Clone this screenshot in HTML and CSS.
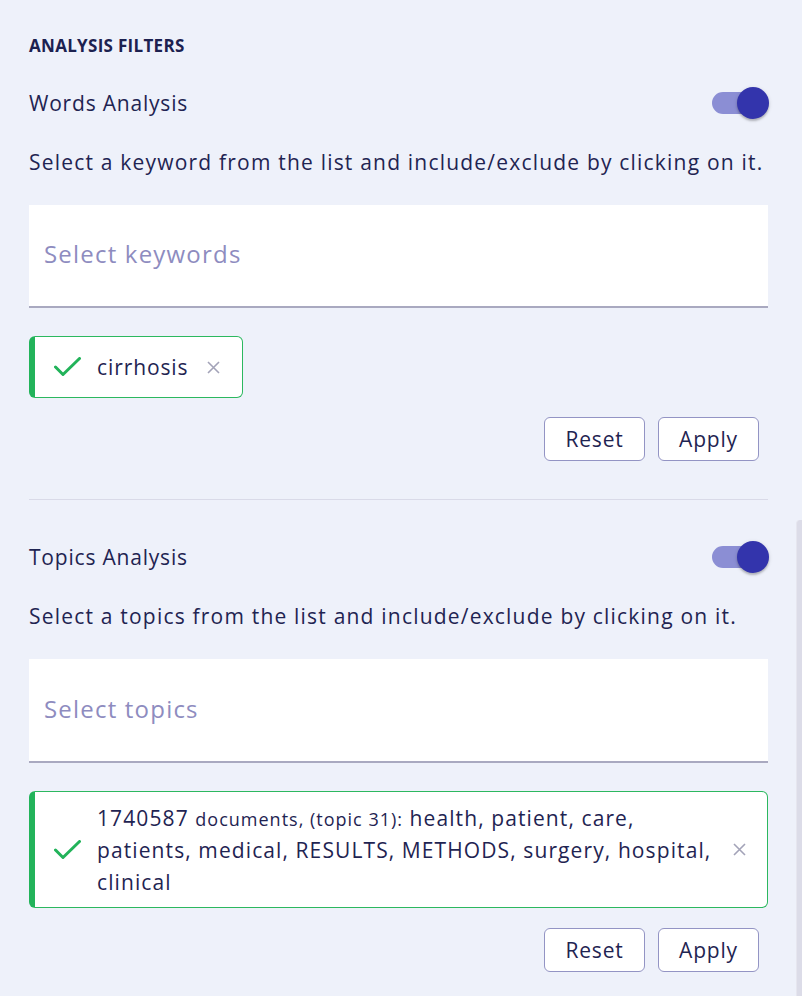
FILE: index.html
```html
<!DOCTYPE html>
<html lang="en">
<head>
<meta charset="utf-8">
<title>Analysis Filters</title>
<link rel="stylesheet" href="styles.css">
</head>
<body>
<div class="panel">
  <h2 class="panel-title">ANALYSIS FILTERS</h2>

  <section class="filter">
    <div class="filter-head">
      <span class="filter-name">Words Analysis</span>
      <span class="switch"><span class="switch-track"></span><span class="switch-thumb"></span></span>
    </div>
    <p class="filter-desc">Select a keyword from the list and include/exclude by clicking on it.</p>
    <div class="select"><span class="placeholder">Select keywords</span></div>
    <div class="chips">
      <div class="chip">
        <svg class="chip-check" width="27" height="20" viewBox="0 0 27 20"><polyline points="1.5,10 9,17.5 25.5,1.5" fill="none" stroke="#22b35a" stroke-width="3" stroke-linecap="round" stroke-linejoin="round"/></svg>
        <span class="chip-text">cirrhosis</span>
        <svg class="chip-x" width="13" height="13" viewBox="0 0 13 13"><path d="M1 1L12 12M12 1L1 12" stroke="#a3a3b8" stroke-width="1.6" fill="none"/></svg>
      </div>
    </div>
    <div class="actions">
      <button class="btn">Reset</button>
      <button class="btn">Apply</button>
    </div>
  </section>

  <hr class="divider">

  <section class="filter filter-second">
    <div class="filter-head">
      <span class="filter-name">Topics Analysis</span>
      <span class="switch"><span class="switch-track"></span><span class="switch-thumb"></span></span>
    </div>
    <p class="filter-desc">Select a topics from the list and include/exclude by clicking on it.</p>
    <div class="select"><span class="placeholder">Select topics</span></div>
    <div class="chips">
      <div class="chip chip-wide">
        <svg class="chip-check" width="27" height="20" viewBox="0 0 27 20"><polyline points="1.5,10 9,17.5 25.5,1.5" fill="none" stroke="#22b35a" stroke-width="3" stroke-linecap="round" stroke-linejoin="round"/></svg>
        <div class="chip-text"><span class="chip-count">1740587</span> <span class="chip-small">documents, (topic 31):</span> <span class="chip-words">health, patient, care,</span> <span class="chip-words">patients, medical, RESULTS, METHODS, surgery, hospital, clinical</span></div>
        <svg class="chip-x" width="13" height="13" viewBox="0 0 13 13"><path d="M1 1L12 12M12 1L1 12" stroke="#a3a3b8" stroke-width="1.6" fill="none"/></svg>
      </div>
    </div>
    <div class="actions">
      <button class="btn">Reset</button>
      <button class="btn">Apply</button>
    </div>
  </section>
</div>
<div class="scrollbar"></div>
</body>
</html>
```
FILE: styles.css
```css
* { box-sizing: border-box; }
html, body { margin: 0; padding: 0; }
body {
  background: #eef1fa;
  color: #1f2452;
  font-family: "Open Sans", "Liberation Sans", sans-serif;
  width: 802px;
  height: 996px;
  overflow: hidden;
}
.panel {
  padding: 36px 34px 0 29px;
}
.panel-title {
  margin: 0;
  font-size: 17px;
  line-height: 20px;
  font-weight: 700;
  letter-spacing: 0.3px;
  color: #1c2150;
}
.filter-head {
  margin-top: 31px;
  margin-right: -1px;
  height: 32px;
  display: flex;
  align-items: center;
  justify-content: space-between;
}
.filter-name {
  font-size: 21px;
  line-height: 32px;
  letter-spacing: 0.8px;
}
.switch {
  position: relative;
  width: 57px;
  height: 32px;
  display: inline-block;
}
.switch-track {
  position: absolute;
  left: 0;
  top: 5px;
  width: 55px;
  height: 22px;
  border-radius: 11px;
  background: #8b8ed4;
}
.switch-thumb {
  position: absolute;
  right: 0;
  top: 0;
  width: 32px;
  height: 32px;
  border-radius: 50%;
  background: #3334ac;
  box-shadow: 0 2px 2px rgba(0,0,0,0.2), 0 1px 4px rgba(0,0,0,0.12);
}
.filter-desc {
  margin: 29px 0 0;
  font-size: 21px;
  line-height: 28px;
  letter-spacing: 1.2px;
  white-space: nowrap;
}
.select {
  margin-top: 29px;
  height: 103px;
  background: #fff;
  border-bottom: 2px solid #a9a9c0;
  display: flex;
  align-items: center;
  padding-left: 15px;
}
.filter-second .select { height: 104px; }
.placeholder {
  font-size: 24px;
  letter-spacing: 1.2px;
  color: #8e8cbf;
  padding-bottom: 4px;
}
.chips {
  margin-top: 28px;
  display: flex;
}
.chip {
  display: flex;
  align-items: center;
  background: #fff;
  border: 1.5px solid #2cb85f;
  border-left: 6px solid #22b35a;
  border-radius: 6px;
  height: 62px;
  padding: 0 22px 0 19px;
}
.chip-check { flex: none; }
.chip-text {
  margin-left: 16px;
  font-size: 21px;
  line-height: 32px;
  letter-spacing: 0.9px;
}
.chip-x {
  flex: none;
  margin-left: 19px;
}
.chip-wide {
  width: 100%;
  height: 117px;
  padding-right: 21px;
}
.chip-wide .chip-text {
  flex: none;
  width: 619px;
  margin-left: 16px;
  margin-top: 1px;
  letter-spacing: 1.1px;
}
.chip-wide .chip-x {
  margin-left: auto;
}
.chip-small {
  font-size: 18px;
  line-height: 1;
  letter-spacing: 1px;
}
.actions {
  margin-top: 19px;
  display: flex;
  justify-content: flex-end;
  gap: 13px;
  padding-right: 9px;
}
.filter-second .actions { margin-top: 20px; }
.btn {
  width: 101px;
  height: 44px;
  border: 1.5px solid #9394c4;
  border-radius: 6px;
  background: #fff;
  color: #1f2452;
  font-family: inherit;
  font-size: 21px;
  letter-spacing: 0.8px;
  padding: 0;
  cursor: pointer;
}
.divider {
  margin: 38px 0 0;
  border: 0;
  border-top: 1px solid #d9dae8;
}
.divider + .filter .filter-head { margin-top: 41px; }
.scrollbar {
  position: fixed;
  right: 0;
  top: 520px;
  width: 6px;
  bottom: 0;
  background: #dcdce8;
  border-left: 1px solid #e6e6ef;
  border-top-left-radius: 4px;
}
```
